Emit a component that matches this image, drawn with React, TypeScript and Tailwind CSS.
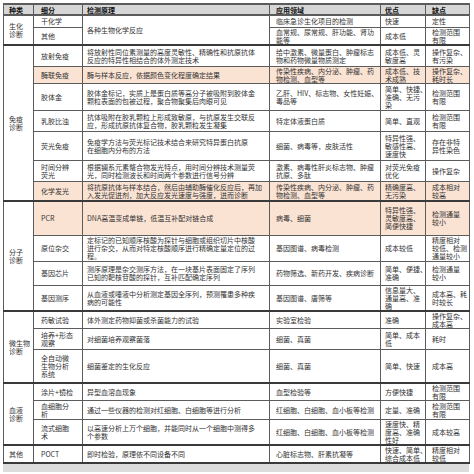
type Row = {
  cat?: string;
  catSpan?: number;
  sub: string;
  principle?: string;
  pSpan?: number;
  app: string;
  pro: string;
  con: string;
  h: number;
  hl?: boolean;
  end?: boolean;
};

const rows: Row[] = [
  { cat: '生化\n诊断', catSpan: 2, sub: '干化学', principle: '各种生物化学反应', pSpan: 2, app: '临床急诊生化项目的检测', pro: '快速', con: '定性', h: 12 },
  { sub: '其他', app: '血常规、尿常规、肝功能、肾功\n能等', pro: '成本低', con: '检测范围\n有限', h: 18, end: true },
  { cat: '免疫\n诊断', catSpan: 7, sub: '放射免疫', principle: '将放射性同位素测量的高度灵敏性、精确性和抗原抗体\n反应的特异性相结合的体外测定技术', app: '给中激素、微量蛋白、肿瘤标志\n物和药物微量物质测定', pro: '成本低、灵\n敏度高', con: '操作复杂、\n有污染', h: 21 },
  { sub: '酶联免疫', hl: true, principle: '酶与样本反应，依据颜色变化程度确定结果', app: '传染性疾病、内分泌、肿瘤、药\n物检测、血型等', pro: '成本低、技\n术成熟', con: '操作复杂、\n耗时长', h: 17 },
  { sub: '胶体金', principle: '胶体金标记，实质上是蛋白质等高分子被吸附到胶体金\n颗粒表面的包被过程，聚合物聚集后肉眼可见', app: '乙肝、HIV、标志物、女性妊娠、\n毒品等', pro: '简单、快捷、\n准确、无污\n染', con: '检测范围\n有限', h: 27 },
  { sub: '乳胶比浊', principle: '抗体吸附在胶乳颗粒上形成致敏原，与抗原发生交联反\n应，形成抗原抗体复合物，胶乳颗粒发生凝集', app: '特定体液蛋白质', pro: '简单、直观', con: '检测范围\n有限', h: 21 },
  { sub: '荧光免疫', principle: '免疫学方法与荧光标记技术结合来研究特异蛋白抗原\n在细胞内分布的方法', app: '细菌、病毒等，皮肤活性', pro: '特异性强、\n敏感性高、\n速度快', con: '存在非特\n异性染色', h: 29 },
  { sub: '时间分辨\n荧光', principle: '根据镧系元素螯合物发光特点，用时间分辨技术测量荧\n光，同时检测波长和时间两个参数进行信号分辨', app: '激素、病毒性肝炎标志物、肿瘤\n抗原、多肽', pro: '对荧光免疫\n优化', con: '操作复杂', h: 21 },
  { sub: '化学发光', hl: true, principle: '将抗原抗体与样本结合，然后由辅助酶催化反应后，再加\n入发光促进剂，加大反应发光速度与强度，进而诊断', app: '传染性疾病、内分泌、肿瘤、药\n物检测、血型等', pro: '精确度高、\n无污染', con: '成本相对\n较高', h: 20, end: true },
  { cat: '分子\n诊断', catSpan: 4, sub: 'PCR', hl: true, principle: 'DNA高温变成单链，低温互补配对链合成', app: '病毒、细菌', pro: '特异性强、\n灵敏度高、\n简便快捷', con: '检测通量\n较小', h: 34 },
  { sub: '原位杂交', principle: '定标记的已知顺序核酸为探针与细胞或组织切片中核酸\n进行杂交，从而对特定核酸顺序进行精确定量定位的过\n程。', app: '基因图谱、病毒检测', pro: '成本较低', con: '精度相对\n较低、检测\n通量较小', h: 26 },
  { sub: '基因芯片', principle: '测序原理是杂交测序方法，在一块基片表面固定了序列\n已知的靶核苷酸的探针，互补匹配确定序列', app: '药物筛选、新药开发、疾病诊断', pro: '简单、便捷、\n准确', con: '检测通量\n较小', h: 24 },
  { sub: '基因测序', principle: '从血液或唾液中分析测定基因全序列，预测罹患多种疾\n病的可能性', app: '基因图谱、唐筛等', pro: '信息量大、\n通量高、准\n确', con: '成本高、耗\n时较长', h: 26, end: true },
  { cat: '微生物\n诊断', catSpan: 3, sub: '药敏试验', principle: '体外测定药物抑菌或杀菌能力的试验', app: '实验室检验', pro: '准确', con: '操作复杂、\n成本高', h: 14 },
  { sub: '培养+形态\n观察', principle: '对细菌培养观察菌落', app: '细菌、真菌', pro: '简单、成本\n低', con: '耗时', h: 21 },
  { sub: '全自动微\n生物分析\n系统', principle: '细菌鉴定的生化反应', app: '细菌、真菌', pro: '简单、快速', con: '成本高', h: 33, end: true },
  { cat: '血液\n诊断', catSpan: 3, sub: '涂片+镜检', principle: '异型血溶血现象', app: '血型检验等', pro: '方便快捷', con: '检测范围\n有限', h: 16 },
  { sub: '血细胞分\n析', principle: '通过一些仪器的检测对红细胞、白细胞等进行分析', app: '红细胞、白细胞、血小板等检测', pro: '定量、准确', con: '检测范围\n有限', h: 19 },
  { sub: '流式细胞\n术', principle: '以高速分析上万个细胞，并能同时从一个细胞中测得多\n个参数', app: '红细胞、白细胞、血小板等检测', pro: '速度快、精\n度高、准确\n性好', con: '成本较高', h: 26, end: true },
  { cat: '其他', catSpan: 1, sub: 'POCT', principle: '即时检验，原理依不同设备不同', app: '心脏标志物、肝素抗凝等', pro: '快速、简单、\n综合成本低', con: '精度相对\n较低', h: 17, end: true },
];

const td = 'border border-[#5c5c5c] align-middle whitespace-pre text-left p-0';
const thick = 'border-b-2 border-b-[#3a3a3a]';

export default function App() {
  return (
    <div className="w-[474px] h-[474px] bg-white pt-[3px] pl-[3px] overflow-hidden font-['Noto_Sans_CJK_SC','Liberation_Sans',sans-serif] text-[7px] leading-[8px] text-[#333]">
      <table className="w-[466px] table-fixed border-collapse">
        <colgroup>
          <col className="w-[30px]" />
          <col className="w-[49px]" />
          <col className="w-[187px]" />
          <col className="w-[111px]" />
          <col className="w-[45px]" />
          <col className="w-[44px]" />
        </colgroup>
        <thead>
          <tr className="h-[11px] bg-[#d6d6d6] font-bold text-[#111]">
            <th className={`${td} border-t-2 border-b-2 border-[#3a3a3a] pl-[5px]`}>种类</th>
            <th className={`${td} border-t-2 border-b-2 border-[#3a3a3a] pl-[7px]`}>细分</th>
            <th className={`${td} border-t-2 border-b-2 border-[#3a3a3a] pl-[4px]`}>检测原理</th>
            <th className={`${td} border-t-2 border-b-2 border-[#3a3a3a] pl-[6px]`}>应用领域</th>
            <th className={`${td} border-t-2 border-b-2 border-[#3a3a3a] pl-[4px]`}>优点</th>
            <th className={`${td} border-t-2 border-b-2 border-[#3a3a3a] pl-[6px]`}>缺点</th>
          </tr>
        </thead>
        <tbody>
          {rows.map((r, i) => {
            const end = r.end ? thick : '';
            const bg = r.hl ? 'bg-[#fbe3d3]' : '';
            return (
              <tr key={i} style={{ height: r.h }}>
                {r.cat && (
                  <td rowSpan={r.catSpan} className={`${td} ${thick} pl-[5px] bg-white`}>
                    {r.cat}
                  </td>
                )}
                <td className={`${td} ${end} ${bg} pl-[7px]`}>{r.sub}</td>
                {r.principle && (
                  <td rowSpan={r.pSpan ?? 1} className={`${td} ${r.pSpan ? thick : end} ${bg} pl-[4px]`}>
                    {r.principle}
                  </td>
                )}
                <td className={`${td} ${end} ${bg} pl-[6px]`}>{r.app}</td>
                <td className={`${td} ${end} ${bg} pl-[4px]`}>{r.pro}</td>
                <td className={`${td} ${end} ${bg} pl-[6px]`}>{r.con}</td>
              </tr>
            );
          })}
        </tbody>
      </table>
      <div className="h-[8px] w-[466px] bg-[#dcdcdc]" />
    </div>
  );
}
